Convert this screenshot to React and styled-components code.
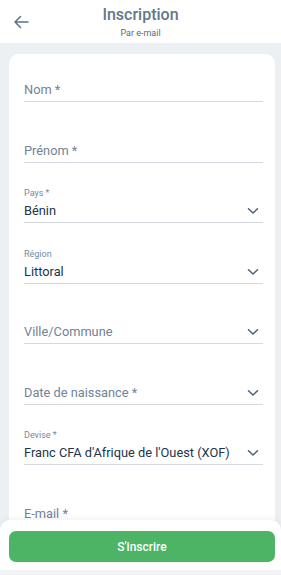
import styled, { createGlobalStyle } from "styled-components";

const Global = createGlobalStyle`
  html, body { margin: 0; padding: 0; }
  body {
    font-family: Roboto, "Noto Sans", sans-serif;
    background: #edf0f3;
  }
`;

const Screen = styled.div`
  height: 100vh;
  display: flex;
  flex-direction: column;
  overflow: hidden;
  background: #edf0f3;
`;

const Header = styled.header`
  height: 43px;
  flex-shrink: 0;
  background: #fff;
  display: flex;
  flex-direction: column;
  align-items: center;
  justify-content: center;
  position: relative;
`;

const Back = styled.button`
  position: absolute;
  left: 11px;
  top: 12px;
  width: 20px;
  height: 20px;
  padding: 0;
  border: none;
  background: none;
  display: flex;
  align-items: center;
  justify-content: center;
`;

const Title = styled.h1`
  margin: 0;
  font-size: 16px;
  font-weight: 500;
  line-height: 19px;
  color: #637889;
`;

const Subtitle = styled.div`
  font-size: 9px;
  line-height: 11px;
  margin-top: 4px;
  color: #5c6b78;
`;

const Body = styled.main`
  flex: 1;
  overflow: hidden;
  padding: 11px 6px 0 9px;
`;

const Card = styled.div`
  background: #fff;
  border-radius: 10px;
  padding: 0 12px 20px 15px;
`;

const Field = styled.div`
  height: ${({ $first }) => ($first ? "48px" : "60.5px")};
  display: flex;
  align-items: flex-end;
  border-bottom: 1px solid #d3d9de;
  box-sizing: border-box;
  padding-bottom: 3px;
`;

const FieldText = styled.div`
  flex: 1;
  display: flex;
  flex-direction: column;
`;

const SmallLabel = styled.div`
  font-size: 9px;
  line-height: 11px;
  color: #77889a;
  margin-bottom: 4px;
`;

const Label = styled.div`
  font-size: 12.8px;
  line-height: 16px;
  color: ${({ $value }) => ($value ? "#22344a" : "#728396")};
`;

const Chevron = styled.svg`
  width: 12px;
  height: 16px;
  margin-right: 4px;
  flex-shrink: 0;
`;

const Footer = styled.footer`
  flex-shrink: 0;
  background: #fff;
  border-radius: 10px 10px 0 0;
  box-shadow: 0 -2px 6px rgba(0, 0, 0, 0.05);
  padding: 11px 6px 8px 9px;
  border-bottom: 5px solid #f1f3f5;
`;

const Submit = styled.button`
  width: 100%;
  height: 31px;
  border: none;
  border-radius: 7px;
  background: #4cb464;
  color: #fff;
  font-family: Roboto, "Noto Sans", sans-serif;
  font-size: 12px;
  font-weight: 500;
`;

const fields = [
  { label: "Nom *" },
  { label: "Prénom *" },
  { label: "Pays *", value: "Bénin", select: true },
  { label: "Région", value: "Littoral", select: true },
  { label: "Ville/Commune", select: true },
  { label: "Date de naissance *", select: true },
  { label: "Devise *", value: "Franc CFA d'Afrique de l'Ouest (XOF)", select: true },
  { label: "E-mail *" },
];

function ArrowDown() {
  return (
    <Chevron viewBox="0 0 12 16">
      <path d="M1.5 5.8 L6 10 L10.5 5.8" fill="none" stroke="#4c5f72" strokeWidth="1.5" strokeLinecap="round" strokeLinejoin="round" />
    </Chevron>
  );
}

export default function App() {
  return (
    <>
      <Global />
      <Screen>
        <Header>
          <Back aria-label="Retour">
            <svg width="16" height="14" viewBox="0 0 16 14">
              <path d="M15 7 H2 M7.5 1.5 L2 7 L7.5 12.5" fill="none" stroke="#5e7386" strokeWidth="1.5" strokeLinecap="round" strokeLinejoin="round" />
            </svg>
          </Back>
          <Title>Inscription</Title>
          <Subtitle>Par e-mail</Subtitle>
        </Header>
        <Body>
          <Card>
            {fields.map((f, i) => (
              <Field key={f.label} $first={i === 0}>
                <FieldText>
                  {f.value ? (
                    <>
                      <SmallLabel>{f.label}</SmallLabel>
                      <Label $value>{f.value}</Label>
                    </>
                  ) : (
                    <Label>{f.label}</Label>
                  )}
                </FieldText>
                {f.select && <ArrowDown />}
              </Field>
            ))}
          </Card>
        </Body>
        <Footer>
          <Submit>S'inscrire</Submit>
        </Footer>
      </Screen>
    </>
  );
}
